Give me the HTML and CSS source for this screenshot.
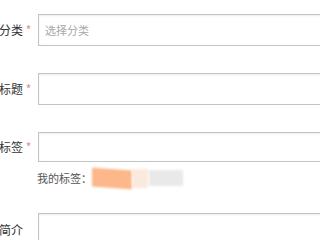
FILE: index.html
```html
<!DOCTYPE html>
<html>
<head>
<meta charset="utf-8">
<link rel="stylesheet" href="styles.css">
</head>
<body>
<form class="form">
  <div class="row row-cat">
    <label class="label">分类 <span class="req">*</span></label>
    <div class="field"><input class="input" placeholder="选择分类"></div>
  </div>
  <div class="row row-title">
    <label class="label">标题 <span class="req">*</span></label>
    <div class="field"><input class="input"></div>
  </div>
  <div class="row row-tag">
    <label class="label">标签 <span class="req">*</span></label>
    <div class="field"><input class="input input-tag"></div>
  </div>
  <div class="hint">
    <span class="hint-text">我的标签：</span>
    <span class="blob blob-orange"></span>
    <span class="blob blob-peach"></span>
    <span class="blob blob-grey"></span>
  </div>
  <div class="row row-desc">
    <label class="label">简介</label>
    <div class="field"><textarea class="input textarea"></textarea></div>
  </div>
</form>
</body>
</html>
```
FILE: styles.css
```css
html, body {
  margin: 0;
  padding: 0;
  background: #ffffff;
  overflow: hidden;
}
body {
  width: 320px;
  height: 240px;
  font-family: "Noto Sans CJK SC", "Noto Sans", sans-serif;
  color: #333333;
}
.form {
  display: flex;
  flex-direction: column;
  padding-top: 14px;
}
.row {
  display: flex;
  align-items: center;
  margin-left: -1px;
}
.row-title { margin-top: 27px; }
.row-tag { margin-top: 27px; }
.row-desc {
  margin-top: 24px;
  align-items: flex-start;
}
.label {
  width: 39px;
  flex: none;
  font-size: 12px;
  line-height: 16px;
  color: #333333;
  white-space: nowrap;
}
.row-desc .label {
  margin-top: 9px;
}
.req {
  color: #e58a8a;
  font-size: 12px;
}
.field {
  flex: 1;
  margin-right: -20px;
}
.input {
  display: block;
  box-sizing: border-box;
  width: 100%;
  height: 32px;
  margin: 0;
  padding: 0 6px;
  border: 1px solid #c4c4c4;
  border-radius: 0;
  box-shadow: inset 0 1px 2px rgba(0, 0, 0, 0.08);
  font-family: "Noto Sans CJK SC", sans-serif;
  font-size: 11px;
  color: #333333;
  background: #ffffff;
  outline: none;
}
.input::placeholder {
  color: #a8a8a8;
}
.input-tag {
  height: 30px;
}
.textarea {
  height: 60px;
  resize: none;
}
.hint {
  display: flex;
  align-items: center;
  margin-top: 5px;
  padding-left: 37px;
  height: 22px;
}
.hint-text {
  font-size: 11px;
  color: #555555;
  line-height: 14px;
}
.blob {
  display: inline-block;
  height: 19px;
  filter: blur(1px);
}
.blob-orange {
  width: 40px;
  margin-left: 0;
  background: #fcb88b;
  transform: skewY(4deg);
}
.blob-peach {
  width: 16px;
  background: #fbe9de;
}
.blob-grey {
  width: 34px;
  height: 16px;
  margin-left: 1px;
  background: #e9e9e9;
}
```
